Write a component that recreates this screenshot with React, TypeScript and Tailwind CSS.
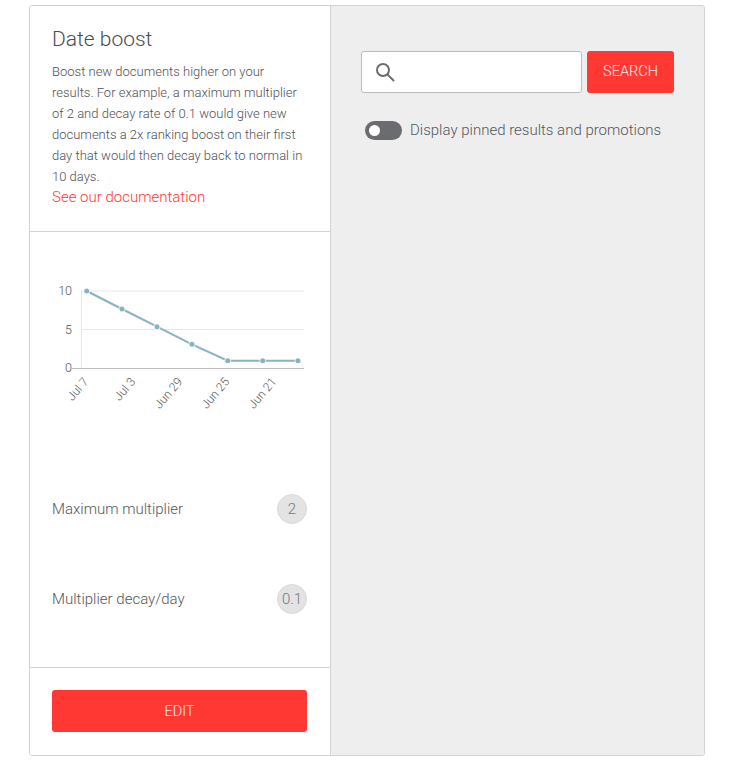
import React from 'react';

const points = [
  [86.7, 291],
  [122, 309],
  [157, 326.7],
  [192, 344.3],
  [227.7, 360.7],
  [262.7, 360.7],
  [298, 360.7],
];

const xLabels = [
  { text: 'Jul 7', x: 89, y: 382 },
  { text: 'Jul 3', x: 136, y: 382 },
  { text: 'Jun 29', x: 183, y: 382 },
  { text: 'Jun 25', x: 230, y: 382 },
  { text: 'Jun 21', x: 277, y: 382 },
];

const BoostChart = () => (
  <svg width="300" height="170" viewBox="30 262 300 170" className="block">
    <line x1="81" y1="291" x2="304" y2="291" stroke="#e6e6e6" />
    <line x1="81" y1="329.5" x2="304" y2="329.5" stroke="#e6e6e6" />
    <line x1="81.5" y1="291" x2="81.5" y2="368" stroke="#e6e6e6" />
    <line x1="72" y1="368.5" x2="304" y2="368.5" stroke="#bdbdbd" />
    {[
      { t: '10', y: 295 },
      { t: '5', y: 334 },
      { t: '0', y: 372 },
    ].map((l) => (
      <text key={l.t} x="72" y={l.y} textAnchor="end" fontSize="12.5" fill="#555" fontFamily="Roboto, sans-serif" fontWeight="300">
        {l.t}
      </text>
    ))}
    {xLabels.map((l) => (
      <text
        key={l.text}
        x={l.x}
        y={l.y}
        textAnchor="end"
        fontSize="12"
        fill="#555"
        fontFamily="Roboto, sans-serif"
        fontWeight="300"
        transform={`rotate(-50 ${l.x} ${l.y})`}
      >
        {l.text}
      </text>
    ))}
    <polyline points={points.map((p) => p.join(',')).join(' ')} fill="none" stroke="#86b4c5" strokeWidth="2" />
    {points.map((p) => (
      <g key={p[0]}>
        <circle cx={p[0]} cy={p[1]} r="3.5" fill="#ffffff" fillOpacity="0.7" />
        <circle cx={p[0]} cy={p[1]} r="2.5" fill="#86b4c5" />
      </g>
    ))}
  </svg>
);

const SettingRow = ({ label, value }: { label: string; value: string }) => (
  <div className="flex items-center justify-between h-[30px]">
    <span className="text-[15px] text-[#55565a]">{label}</span>
    <span className="w-[30px] h-[30px] rounded-full bg-[#e3e3e3] border border-[#d9d9d9] flex items-center justify-center text-[15px] text-[#77787c]">
      {value}
    </span>
  </div>
);

export default function App() {
  return (
    <div className="bg-white w-[735px] h-[760px] pt-[5px] pl-[29px] font-['Roboto',sans-serif] font-light">
      <div className="flex w-[676px] h-[751px] border border-[#d3d3d3] rounded-[3px] overflow-hidden">
        {/* Left panel */}
        <div className="w-[301px] shrink-0 bg-white border-r border-[#d3d3d3] flex flex-col">
          <div className="h-[226px] border-b border-[#d3d3d3] pl-[22px] pr-[23px] pt-[19px]">
            <h2 className="text-[21px] leading-[28px] text-[#4a4b50]">Date boost</h2>
            <p className="mt-[8px] text-[13px] leading-[21px] text-[#4f5055]">
              Boost new documents higher on your results. For example, a maximum multiplier of 2 and decay rate of 0.1 would give new documents a 2x ranking boost on their first day that would then decay back to normal in 10 days.
            </p>
            <a className="block text-[15px] leading-[21px] text-[#ff3833]">See our documentation</a>
          </div>

          <div className="h-[436px] border-b border-[#d3d3d3] flex flex-col">
            <div className="pt-[30px]">
              <BoostChart />
            </div>
            <div className="pl-[22px] pr-[23px] pt-[62px] flex flex-col gap-[60px]">
              <SettingRow label="Maximum multiplier" value="2" />
              <SettingRow label="Multiplier decay/day" value="0.1" />
            </div>
          </div>

          <div className="pl-[22px] pr-[23px] pt-[22px]">
            <button className="w-full h-[42px] pt-[1px] rounded-[3px] bg-[#ff3833] text-[14.5px] text-white/90">EDIT</button>
          </div>
        </div>

        {/* Right panel */}
        <div className="flex-1 bg-[#eeeeee] pl-[30px] pr-[30px] pt-[45px]">
          <div className="flex gap-[5px]">
            <div className="w-[221px] h-[42px] bg-white border border-[#bdbdbd] rounded-[3px] flex items-center pl-[13px]">
              <svg width="20" height="20" viewBox="0 0 20 20" fill="none" stroke="#6b6c70" strokeWidth="2">
                <circle cx="8" cy="8" r="6" />
                <line x1="12.4" y1="12.4" x2="19" y2="19" />
              </svg>
            </div>
            <button className="w-[87px] h-[42px] pb-[1px] rounded-[3px] bg-[#ff3833] text-[14.5px] text-white/90">SEARCH</button>
          </div>
          <div className="flex items-center mt-[26px] ml-[4px]">
            <div className="w-[37px] h-[19px] rounded-full bg-[#6b6c70] flex items-center pl-[4px]">
              <div className="w-[11px] h-[11px] rounded-full bg-white" />
            </div>
            <span className="ml-[8px] text-[15px] text-[#55565a]">Display pinned results and promotions</span>
          </div>
        </div>
      </div>
    </div>
  );
}
